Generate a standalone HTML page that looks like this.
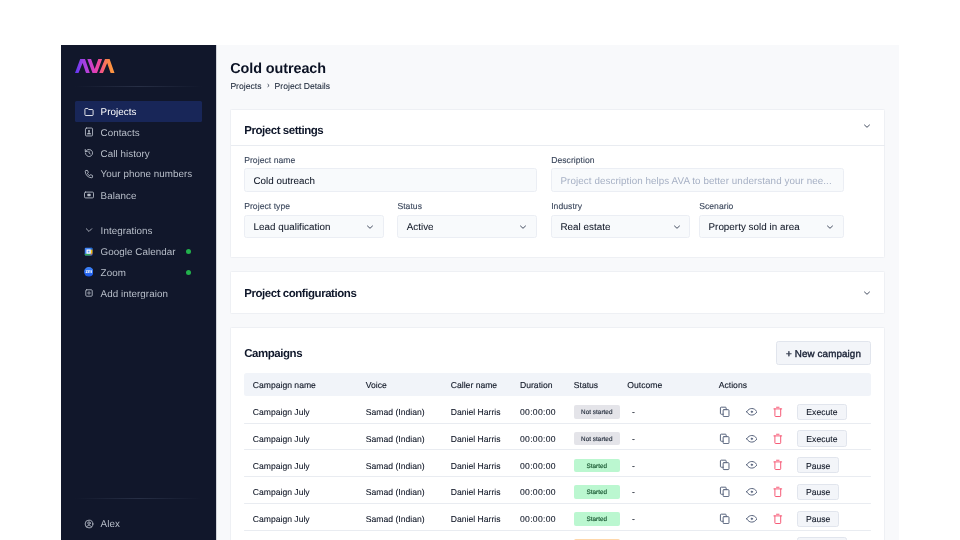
<!DOCTYPE html>
<html><head><meta charset="utf-8"><title>Cold outreach</title>
<style>
*{box-sizing:border-box;margin:0;padding:0}
html,body{width:960px;height:540px;overflow:hidden;background:#fff;font-family:"Liberation Sans",sans-serif;color:#0f172a;text-rendering:geometricPrecision}
#app{position:absolute;left:0;top:0;width:960px;height:540px;overflow:hidden;will-change:transform}
.abs{position:absolute;white-space:nowrap}
.hr{position:absolute;width:127px;height:1px;background:linear-gradient(90deg,rgba(70,80,105,0),rgba(70,80,105,.42) 50%,rgba(70,80,105,0))}
.ni{fill:none;stroke-width:2.100;stroke-linecap:round;stroke-linejoin:round}
.ai{fill:none;stroke:#546079;color:#546079;stroke-width:2.050;stroke-linecap:round;stroke-linejoin:round}
.nav{font-size:9.800px;line-height:12px;letter-spacing:.06px}
.title{font-weight:700;font-size:14.400px;line-height:17px;letter-spacing:-.08px;color:#0b1224}
.bc{font-size:8.600px;line-height:10px;letter-spacing:0;color:#1e293b;-webkit-text-stroke:.08px #1e293b}
.card{background:#fff;border:1px solid #eef0f4;border-radius:1.500px}
.h2{font-weight:700;font-size:11.500px;line-height:13px;letter-spacing:-.45px;color:#0f172a}
.lbl{font-size:8.600px;line-height:10px;letter-spacing:.04px;color:#3b475c;-webkit-text-stroke:.12px #3b475c}
.inp{background:#f8fafc;border:1px solid #ebeef4;border-radius:2.500px}
.it{font-size:9.800px;line-height:12px;color:#111827;letter-spacing:.04px;-webkit-text-stroke:.06px #111827}
.it.ph{color:#a6b0c4;letter-spacing:.085px;-webkit-text-stroke:0}
.bx{border:1px solid #e1e5ed;background:#f3f5f9;border-radius:2.500px}
.nbtn{font-weight:400;font-size:9.800px;line-height:12px;letter-spacing:.12px;-webkit-text-stroke:.38px #1a2236;text-align:center;color:#1a2236}
.th,.td{font-size:8.600px;line-height:11px;letter-spacing:0;color:#111827}
.th{-webkit-text-stroke:.12px #111827}
.td{color:#0d1424;-webkit-text-stroke:.08px #0d1424}
.bg{width:46px;height:13.500px;border-radius:2px}
.badge{font-size:6.300px;line-height:8px;text-align:center;color:#27303f;letter-spacing:.05px;-webkit-text-stroke:.15px currentColor}
.b-ns{background:#e4e4e9}
.b-st{background:#bbf7d0}
.b-or{background:#fed7aa}
.b-stt{color:#14532d}
.b-ort{color:#7c2d12}
.btn{font-size:8.600px;line-height:11px;text-align:center;color:#111827;-webkit-text-stroke:.1px #111827}
</style></head><body>
<div id="app">
<div class="abs" style="left:61px;top:45px;width:155px;height:495px;background:#11172b"></div>
<div class="abs" style="left:216px;top:45px;width:683px;height:495px;background:#f8f9fb"></div>
<div class="abs" style="left:216px;top:45px;width:1px;height:495px;background:#d2d4da"></div>
<svg class="abs" style="left:75px;top:59px" width="40" height="14" viewBox="0 0 40 14">
<defs><linearGradient id="lg" x1="0" x2="1" y1="0" y2="0"><stop offset="0" stop-color="#5a36f5"/><stop offset=".18" stop-color="#9a3fe4"/><stop offset=".33" stop-color="#b840d8"/><stop offset=".5" stop-color="#e03eb8"/><stop offset=".66" stop-color="#f3508a"/><stop offset=".78" stop-color="#f97a55"/><stop offset=".9" stop-color="#fd9040"/><stop offset="1" stop-color="#ff9a45"/></linearGradient></defs>
<path d="M0 14L5.200 0H10L14.800 14H11L7.600 4.100L3.500 14Z M12.300 0H16.100L19.700 9.900L23.300 0H27.100L22 14H17.500Z M24.200 14L30 0H34.600L39.500 14H35.600L32.200 4.100L28 14Z" fill="url(#lg)"/></svg>
<div class="hr" style="left:75px;top:86px"></div>
<div class="hr" style="left:75px;top:498px"></div>
<div class="abs" style="left:75px;top:101px;width:127.200px;height:20.700px;border-radius:1.500px;background:#182658"></div>
<svg class="abs ni" style="left:83.70px;top:106.50px;color:#ffffff;stroke:#ffffff" width="10" height="10" viewBox="0 0 24 24"><path d="M2.200 5.300A1.800 1.800 0 0 1 4 3.500H9.200l2.200 2.600h8.600A1.800 1.800 0 0 1 21.800 7.900V18.700a1.800 1.800 0 0 1-1.800 1.800H4A1.800 1.800 0 0 1 2.200 18.700z"/></svg>
<div class="abs nav" style="left:100.6px;top:107px;color:#ffffff">Projects</div>
<svg class="abs ni" style="left:83.70px;top:127.30px;color:#b9bfca;stroke:#b9bfca" width="10" height="10" viewBox="0 0 24 24"><rect x="3.500" y="2.500" width="17" height="19" rx="2.500"/><circle cx="12" cy="9.500" r="2.400" fill="currentColor" stroke="none"/><path d="M7.500 16.500c1-2.200 2.500-3 4.500-3s3.500.800 4.500 3z" fill="currentColor" stroke-width="1"/></svg>
<div class="abs nav" style="left:100.6px;top:128px;color:#b9bfca">Contacts</div>
<svg class="abs ni" style="left:83.70px;top:148.30px;color:#b9bfca;stroke:#b9bfca" width="10" height="10" viewBox="0 0 24 24"><path d="M3.500 12a8.500 8.500 0 1 0 2.800-6.300L3 8.500"/><path d="M3 3.500v5h5"/><path d="M12 7.500V12l3 2"/></svg>
<div class="abs nav" style="left:100.6px;top:149px;color:#b9bfca">Call history</div>
<svg class="abs ni" style="left:83.70px;top:169.00px;color:#b9bfca;stroke:#b9bfca" width="10" height="10" viewBox="0 0 24 24"><path d="M5 3.500h3.500l2 5-2.500 1.700a11 11 0 0 0 5.800 5.800L15.500 13.500l5 2V19a2 2 0 0 1-2 2A15.500 15.500 0 0 1 3 5.500a2 2 0 0 1 2-2"/></svg>
<div class="abs nav" style="left:100.6px;top:169px;color:#b9bfca">Your phone numbers</div>
<svg class="abs ni" style="left:83.70px;top:190.35px;color:#b9bfca;stroke:#b9bfca" width="10" height="10" viewBox="0 0 24 24"><rect x="1.200" y="5" width="21.600" height="14" rx="2.500"/><rect x="8" y="9.200" width="8" height="5.600" rx="1.500" fill="currentColor" stroke="none"/></svg>
<div class="abs nav" style="left:100.6px;top:191px;color:#b9bfca">Balance</div>
<svg class="abs ni" style="left:83.70px;top:225.30px;color:#b9bfca;stroke:#b9bfca" width="10" height="10" viewBox="0 0 24 24"><path d="M5.500 9l6.500 6.500L18.500 9"/></svg>
<div class="abs nav" style="left:100.6px;top:226px;color:#b9bfca">Integrations</div>
<svg class="abs " style="left:84.20px;top:246.60px;" width="9.2" height="9.2" viewBox="0 0 24 24"><rect x="2" y="2" width="20" height="20" rx="2.500" fill="#4285f4"/><path d="M2 17.500h15.500V22H4.500A2.500 2.500 0 0 1 2 19.500z" fill="#34a853"/><path d="M17.500 6.500H22v11h-4.500z" fill="#fbbc04"/><path d="M17.500 2h2A2.500 2.500 0 0 1 22 4.500v2h-4.500z" fill="#1967d2"/><path d="M17.500 17.500H22L17.500 22z" fill="#ea4335"/><rect x="6.500" y="6.500" width="11" height="11" fill="#fff"/><rect x="9.600" y="9.600" width="4.800" height="4.800" fill="#5a95f5"/></svg>
<div class="abs nav" style="left:100.6px;top:247px;color:#b9bfca">Google Calendar</div>
<div class="abs" style="left:185.800px;top:248.70px;width:5px;height:5px;border-radius:50%;background:#22b14c"></div>
<svg class="abs " style="left:83.80px;top:267.30px;" width="9.6" height="9.6" viewBox="0 0 24 24"><defs><linearGradient id="zg" x1="0" x2="0" y1="0" y2="1"><stop offset="0" stop-color="#3f86fb"/><stop offset="1" stop-color="#1a56e8"/></linearGradient></defs><circle cx="12" cy="12" r="12" fill="url(#zg)"/><text x="12" y="15.800" font-size="12.500" font-weight="700" text-anchor="middle" letter-spacing="-.6" fill="#fff" font-family="Liberation Sans, sans-serif">zm</text></svg>
<div class="abs nav" style="left:100.6px;top:268px;color:#b9bfca">Zoom</div>
<div class="abs" style="left:185.800px;top:269.60px;width:5px;height:5px;border-radius:50%;background:#22b14c"></div>
<svg class="abs ni" style="left:83.70px;top:288.20px;color:#b9bfca;stroke:#b9bfca" width="10" height="10" viewBox="0 0 24 24"><rect x="4.300" y="4.300" width="15.400" height="15.400" rx="2.200"/><path d="M12 8.400v7.200M8.400 12h7.200" stroke-width="1.700"/></svg>
<div class="abs nav" style="left:100.6px;top:289px;color:#b9bfca">Add intergraion</div>
<svg class="abs ni" style="left:83.70px;top:518.60px;color:#b9bfca;stroke:#b9bfca" width="10" height="10" viewBox="0 0 24 24"><circle cx="12" cy="12" r="9.300"/><circle cx="12" cy="9.800" r="3"/><path d="M6.500 18.800c1-2.700 3-3.800 5.500-3.800s4.500 1.100 5.500 3.800"/></svg>
<div class="abs nav" style="left:100.6px;top:519px;color:#b9bfca">Alex</div>
<div class="abs title" style="left:230.3px;top:61px;">Cold outreach</div>
<div class="abs bc" style="left:230.4px;top:81px;">Projects</div>
<svg class="abs" style="left:266.200px;top:82.500px" width="5" height="5" viewBox="0 0 5 5" fill="none" stroke="#1e293b" stroke-width=".85" stroke-linecap="round" stroke-linejoin="round"><path d="M1.900 1.400L3.100 2.500L1.900 3.600"/></svg>
<div class="abs bc" style="left:274.6px;top:81px;">Project Details</div>
<div class="abs card" style="left:230px;top:109px;width:655px;height:148.5px"></div>
<div class="abs h2" style="left:244.2px;top:125px;">Project settings</div>
<svg class="abs" style="left:862.00px;top:120.90px" width="10" height="10" viewBox="-5 -5 10 10" fill="none" stroke="#3b4558" stroke-width="0.95" stroke-linecap="round" stroke-linejoin="round"><path d="M-2.500 -1L0 1.300L2.500 -1"/></svg>
<div class="abs" style="left:231px;top:145px;width:653.500px;height:1px;background:#e9ecf1"></div>
<div class="abs lbl" style="left:244.2px;top:155px;">Project name</div>
<div class="abs inp" style="left:244px;top:168.3px;width:292.70000000000005px;height:23.299999999999983px"></div>
<div class="abs it" style="left:253.5px;top:176px;">Cold outreach</div>
<div class="abs lbl" style="left:551.2px;top:155px;">Description</div>
<div class="abs inp" style="left:551px;top:168.3px;width:293px;height:23.299999999999983px"></div>
<div class="abs it ph" style="left:560.5px;top:176px;">Project description helps AVA to better understand your nee...</div>
<div class="abs lbl" style="left:244.2px;top:201px;">Project type</div>
<div class="abs inp" style="left:244px;top:215px;width:139.89999999999998px;height:23.19999999999999px"></div>
<div class="abs it" style="left:253.5px;top:222px;">Lead qualification</div>
<svg class="abs" style="left:365.30px;top:221.50px" width="10" height="10" viewBox="-5 -5 10 10" fill="none" stroke="#3b4558" stroke-width="0.95" stroke-linecap="round" stroke-linejoin="round"><path d="M-2.500 -1L0 1.300L2.500 -1"/></svg>
<div class="abs lbl" style="left:397.4px;top:201px;">Status</div>
<div class="abs inp" style="left:397.2px;top:215px;width:139.50000000000006px;height:23.19999999999999px"></div>
<div class="abs it" style="left:406.7px;top:222px;">Active</div>
<svg class="abs" style="left:518.10px;top:221.50px" width="10" height="10" viewBox="-5 -5 10 10" fill="none" stroke="#3b4558" stroke-width="0.95" stroke-linecap="round" stroke-linejoin="round"><path d="M-2.500 -1L0 1.300L2.500 -1"/></svg>
<div class="abs lbl" style="left:551.2px;top:201px;">Industry</div>
<div class="abs inp" style="left:551px;top:215px;width:139.20000000000005px;height:23.19999999999999px"></div>
<div class="abs it" style="left:560.5px;top:222px;">Real estate</div>
<svg class="abs" style="left:671.60px;top:221.50px" width="10" height="10" viewBox="-5 -5 10 10" fill="none" stroke="#3b4558" stroke-width="0.95" stroke-linecap="round" stroke-linejoin="round"><path d="M-2.500 -1L0 1.300L2.500 -1"/></svg>
<div class="abs lbl" style="left:699.2px;top:201px;">Scenario</div>
<div class="abs inp" style="left:699px;top:215px;width:145px;height:23.19999999999999px"></div>
<div class="abs it" style="left:708.5px;top:222px;">Property sold in area</div>
<svg class="abs" style="left:825.40px;top:221.50px" width="10" height="10" viewBox="-5 -5 10 10" fill="none" stroke="#3b4558" stroke-width="0.95" stroke-linecap="round" stroke-linejoin="round"><path d="M-2.500 -1L0 1.300L2.500 -1"/></svg>
<div class="abs card" style="left:230px;top:271.2px;width:655px;height:43.0px"></div>
<div class="abs h2" style="left:244.2px;top:288px;">Project configurations</div>
<svg class="abs" style="left:862.00px;top:287.60px" width="10" height="10" viewBox="-5 -5 10 10" fill="none" stroke="#3b4558" stroke-width="0.95" stroke-linecap="round" stroke-linejoin="round"><path d="M-2.500 -1L0 1.300L2.500 -1"/></svg>
<div class="abs card" style="left:230px;top:327.3px;width:655px;height:232.7px"></div>
<div class="abs h2" style="left:244.2px;top:348px;">Campaigns</div>
<div class="abs bx" style="left:776.200px;top:341.200px;width:94.700px;height:23.700px"></div>
<div class="abs nbtn" style="left:776.2px;top:349px;width:94.700px">+ New campaign</div>
<div class="abs" style="left:244.200px;top:373.200px;width:626.600px;height:23.100px;background:#f1f4f9;border-radius:2.500px"></div>
<div class="abs th" style="left:252.8px;top:380px;">Campaign name</div>
<div class="abs th" style="left:365.8px;top:380px;">Voice</div>
<div class="abs th" style="left:450.8px;top:380px;">Caller name</div>
<div class="abs th" style="left:520.0px;top:380px;">Duration</div>
<div class="abs th" style="left:573.8px;top:380px;">Status</div>
<div class="abs th" style="left:627.3px;top:380px;">Outcome</div>
<div class="abs th" style="left:718.8px;top:380px;">Actions</div>
<div class="abs td" style="left:252.8px;top:407px;">Campaign July</div>
<div class="abs td" style="left:365.8px;top:407px;">Samad (Indian)</div>
<div class="abs td" style="left:450.8px;top:407px;">Daniel Harris</div>
<div class="abs td" style="left:520.0px;top:407px;letter-spacing:.3px">00:00:00</div>
<div class="abs bg b-ns" style="left:573.800px;top:405.00px"></div>
<div class="abs badge b-nst" style="left:573.8px;top:409px;width:46px">Not started</div>
<div class="abs td" style="left:632px;top:407px;">-</div>
<svg class="abs ai" style="left:719.05px;top:405.75px;" width="11.3" height="11.3" viewBox="0 0 24 24"><rect x="8.800" y="7.800" width="12.400" height="14.700" rx="1.800"/><path d="M15.200 7.800V4.300a1.800 1.800 0 0 0-1.800-1.800H4.800A1.800 1.800 0 0 0 3 4.300v11.400a1.800 1.800 0 0 0 1.800 1.800h4"/></svg>
<svg class="abs ai" style="left:745.70px;top:405.90px;" width="11.6" height="11.6" viewBox="0 0 24 24"><path d="M1.200 12C4.800 6.800 8.300 5.200 12 5.200s7.200 1.600 10.800 6.800c-3.600 5.200-7.100 6.800-10.800 6.800S4.800 17.200 1.200 12z"/><circle cx="12" cy="12" r="1.700" fill="currentColor" stroke-width="1.200"/></svg>
<svg class="abs ai" style="left:771.50px;top:405.80px;stroke:#f65874" width="11.6" height="11.6" viewBox="0 0 24 24"><path d="M3.900 6h16.200M9.400 2.600h5.200M6 6v14.300a1.500 1.500 0 0 0 1.500 1.500h9a1.500 1.500 0 0 0 1.500-1.500V6"/></svg>
<div class="abs bx" style="left:797px;top:403.70px;width:49.8px;height:16.200px"></div>
<div class="abs btn" style="left:797px;top:407px;width:49.8px">Execute</div>
<div class="abs" style="left:244.200px;top:422.70px;width:626.600px;height:1px;background:#e9ecf1;border-radius:1px"></div>
<div class="abs td" style="left:252.8px;top:434px;">Campaign July</div>
<div class="abs td" style="left:365.8px;top:434px;">Samad (Indian)</div>
<div class="abs td" style="left:450.8px;top:434px;">Daniel Harris</div>
<div class="abs td" style="left:520.0px;top:434px;letter-spacing:.3px">00:00:00</div>
<div class="abs bg b-ns" style="left:573.800px;top:431.75px"></div>
<div class="abs badge b-nst" style="left:573.8px;top:436px;width:46px">Not started</div>
<div class="abs td" style="left:632px;top:434px;">-</div>
<svg class="abs ai" style="left:719.05px;top:432.50px;" width="11.3" height="11.3" viewBox="0 0 24 24"><rect x="8.800" y="7.800" width="12.400" height="14.700" rx="1.800"/><path d="M15.200 7.800V4.300a1.800 1.800 0 0 0-1.800-1.800H4.800A1.800 1.800 0 0 0 3 4.300v11.400a1.800 1.800 0 0 0 1.800 1.800h4"/></svg>
<svg class="abs ai" style="left:745.70px;top:432.65px;" width="11.6" height="11.6" viewBox="0 0 24 24"><path d="M1.200 12C4.800 6.800 8.300 5.200 12 5.200s7.200 1.600 10.800 6.800c-3.600 5.200-7.100 6.800-10.800 6.800S4.800 17.200 1.200 12z"/><circle cx="12" cy="12" r="1.700" fill="currentColor" stroke-width="1.200"/></svg>
<svg class="abs ai" style="left:771.50px;top:432.55px;stroke:#f65874" width="11.6" height="11.6" viewBox="0 0 24 24"><path d="M3.900 6h16.200M9.400 2.600h5.200M6 6v14.300a1.500 1.500 0 0 0 1.500 1.500h9a1.500 1.500 0 0 0 1.500-1.500V6"/></svg>
<div class="abs bx" style="left:797px;top:430.45px;width:49.8px;height:16.200px"></div>
<div class="abs btn" style="left:797px;top:434px;width:49.8px">Execute</div>
<div class="abs" style="left:244.200px;top:449.45px;width:626.600px;height:1px;background:#e9ecf1;border-radius:1px"></div>
<div class="abs td" style="left:252.8px;top:461px;">Campaign July</div>
<div class="abs td" style="left:365.8px;top:461px;">Samad (Indian)</div>
<div class="abs td" style="left:450.8px;top:461px;">Daniel Harris</div>
<div class="abs td" style="left:520.0px;top:461px;letter-spacing:.3px">00:00:00</div>
<div class="abs bg b-st" style="left:573.800px;top:458.50px"></div>
<div class="abs badge b-stt" style="left:573.8px;top:463px;width:46px">Started</div>
<div class="abs td" style="left:632px;top:461px;">-</div>
<svg class="abs ai" style="left:719.05px;top:459.25px;" width="11.3" height="11.3" viewBox="0 0 24 24"><rect x="8.800" y="7.800" width="12.400" height="14.700" rx="1.800"/><path d="M15.200 7.800V4.300a1.800 1.800 0 0 0-1.800-1.800H4.800A1.800 1.800 0 0 0 3 4.300v11.400a1.800 1.800 0 0 0 1.800 1.800h4"/></svg>
<svg class="abs ai" style="left:745.70px;top:459.40px;" width="11.6" height="11.6" viewBox="0 0 24 24"><path d="M1.200 12C4.800 6.800 8.300 5.200 12 5.200s7.200 1.600 10.800 6.800c-3.600 5.200-7.100 6.800-10.800 6.800S4.800 17.200 1.200 12z"/><circle cx="12" cy="12" r="1.700" fill="currentColor" stroke-width="1.200"/></svg>
<svg class="abs ai" style="left:771.50px;top:459.30px;stroke:#f65874" width="11.6" height="11.6" viewBox="0 0 24 24"><path d="M3.900 6h16.200M9.400 2.600h5.200M6 6v14.300a1.500 1.500 0 0 0 1.500 1.500h9a1.500 1.500 0 0 0 1.500-1.500V6"/></svg>
<div class="abs bx" style="left:797px;top:457.20px;width:42.3px;height:16.200px"></div>
<div class="abs btn" style="left:797px;top:461px;width:42.3px">Pause</div>
<div class="abs" style="left:244.200px;top:476.20px;width:626.600px;height:1px;background:#e9ecf1;border-radius:1px"></div>
<div class="abs td" style="left:252.8px;top:487px;">Campaign July</div>
<div class="abs td" style="left:365.8px;top:487px;">Samad (Indian)</div>
<div class="abs td" style="left:450.8px;top:487px;">Daniel Harris</div>
<div class="abs td" style="left:520.0px;top:487px;letter-spacing:.3px">00:00:00</div>
<div class="abs bg b-st" style="left:573.800px;top:485.25px"></div>
<div class="abs badge b-stt" style="left:573.8px;top:489px;width:46px">Started</div>
<div class="abs td" style="left:632px;top:487px;">-</div>
<svg class="abs ai" style="left:719.05px;top:486.00px;" width="11.3" height="11.3" viewBox="0 0 24 24"><rect x="8.800" y="7.800" width="12.400" height="14.700" rx="1.800"/><path d="M15.200 7.800V4.300a1.800 1.800 0 0 0-1.800-1.800H4.800A1.800 1.800 0 0 0 3 4.300v11.400a1.800 1.800 0 0 0 1.800 1.800h4"/></svg>
<svg class="abs ai" style="left:745.70px;top:486.15px;" width="11.6" height="11.6" viewBox="0 0 24 24"><path d="M1.200 12C4.800 6.800 8.300 5.200 12 5.200s7.200 1.600 10.800 6.800c-3.600 5.200-7.100 6.800-10.800 6.800S4.800 17.200 1.200 12z"/><circle cx="12" cy="12" r="1.700" fill="currentColor" stroke-width="1.200"/></svg>
<svg class="abs ai" style="left:771.50px;top:486.05px;stroke:#f65874" width="11.6" height="11.6" viewBox="0 0 24 24"><path d="M3.900 6h16.200M9.400 2.600h5.200M6 6v14.300a1.500 1.500 0 0 0 1.500 1.500h9a1.500 1.500 0 0 0 1.500-1.500V6"/></svg>
<div class="abs bx" style="left:797px;top:483.95px;width:42.3px;height:16.200px"></div>
<div class="abs btn" style="left:797px;top:487px;width:42.3px">Pause</div>
<div class="abs" style="left:244.200px;top:502.95px;width:626.600px;height:1px;background:#e9ecf1;border-radius:1px"></div>
<div class="abs td" style="left:252.8px;top:514px;">Campaign July</div>
<div class="abs td" style="left:365.8px;top:514px;">Samad (Indian)</div>
<div class="abs td" style="left:450.8px;top:514px;">Daniel Harris</div>
<div class="abs td" style="left:520.0px;top:514px;letter-spacing:.3px">00:00:00</div>
<div class="abs bg b-st" style="left:573.800px;top:512.00px"></div>
<div class="abs badge b-stt" style="left:573.8px;top:516px;width:46px">Started</div>
<div class="abs td" style="left:632px;top:514px;">-</div>
<svg class="abs ai" style="left:719.05px;top:512.75px;" width="11.3" height="11.3" viewBox="0 0 24 24"><rect x="8.800" y="7.800" width="12.400" height="14.700" rx="1.800"/><path d="M15.200 7.800V4.300a1.800 1.800 0 0 0-1.800-1.800H4.800A1.800 1.800 0 0 0 3 4.300v11.400a1.800 1.800 0 0 0 1.800 1.800h4"/></svg>
<svg class="abs ai" style="left:745.70px;top:512.90px;" width="11.6" height="11.6" viewBox="0 0 24 24"><path d="M1.200 12C4.800 6.800 8.300 5.200 12 5.200s7.200 1.600 10.800 6.800c-3.600 5.200-7.100 6.800-10.800 6.800S4.800 17.200 1.200 12z"/><circle cx="12" cy="12" r="1.700" fill="currentColor" stroke-width="1.200"/></svg>
<svg class="abs ai" style="left:771.50px;top:512.80px;stroke:#f65874" width="11.6" height="11.6" viewBox="0 0 24 24"><path d="M3.900 6h16.200M9.400 2.600h5.200M6 6v14.300a1.500 1.500 0 0 0 1.500 1.500h9a1.500 1.500 0 0 0 1.500-1.500V6"/></svg>
<div class="abs bx" style="left:797px;top:510.70px;width:42.3px;height:16.200px"></div>
<div class="abs btn" style="left:797px;top:514px;width:42.3px">Pause</div>
<div class="abs" style="left:244.200px;top:529.70px;width:626.600px;height:1px;background:#e9ecf1;border-radius:1px"></div>
<div class="abs td" style="left:252.8px;top:541px;">Campaign July</div>
<div class="abs td" style="left:365.8px;top:541px;">Samad (Indian)</div>
<div class="abs td" style="left:450.8px;top:541px;">Daniel Harris</div>
<div class="abs td" style="left:520.0px;top:541px;letter-spacing:.3px">00:00:00</div>
<div class="abs bg b-or" style="left:573.800px;top:538.75px"></div>
<div class="abs badge b-ort" style="left:573.8px;top:543px;width:46px">Paused</div>
<div class="abs td" style="left:632px;top:541px;">-</div>
<svg class="abs ai" style="left:719.05px;top:539.50px;" width="11.3" height="11.3" viewBox="0 0 24 24"><rect x="8.800" y="7.800" width="12.400" height="14.700" rx="1.800"/><path d="M15.200 7.800V4.300a1.800 1.800 0 0 0-1.800-1.800H4.800A1.800 1.800 0 0 0 3 4.300v11.400a1.800 1.800 0 0 0 1.800 1.800h4"/></svg>
<svg class="abs ai" style="left:745.70px;top:539.65px;" width="11.6" height="11.6" viewBox="0 0 24 24"><path d="M1.200 12C4.800 6.800 8.300 5.200 12 5.200s7.200 1.600 10.800 6.800c-3.600 5.200-7.100 6.800-10.800 6.800S4.800 17.200 1.200 12z"/><circle cx="12" cy="12" r="1.700" fill="currentColor" stroke-width="1.200"/></svg>
<svg class="abs ai" style="left:771.50px;top:539.55px;stroke:#f65874" width="11.6" height="11.6" viewBox="0 0 24 24"><path d="M3.900 6h16.200M9.400 2.600h5.200M6 6v14.300a1.500 1.500 0 0 0 1.500 1.500h9a1.500 1.500 0 0 0 1.500-1.500V6"/></svg>
<div class="abs bx" style="left:797px;top:537.45px;width:49.8px;height:16.200px"></div>
<div class="abs btn" style="left:797px;top:541px;width:49.8px">Resume</div>
<div class="abs" style="left:244.200px;top:556.45px;width:626.600px;height:1px;background:#e9ecf1;border-radius:1px"></div>
</div>
</body></html>
